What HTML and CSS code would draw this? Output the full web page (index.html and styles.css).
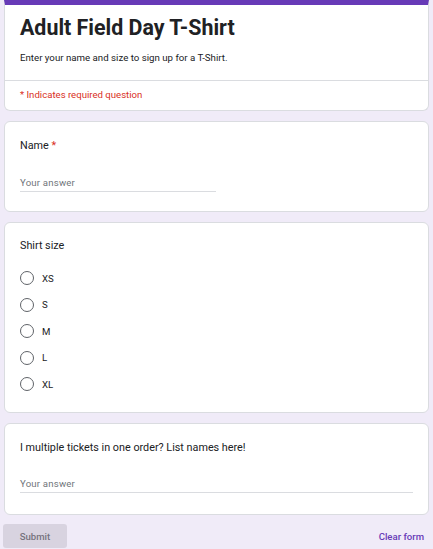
FILE: index.html
```html
<!DOCTYPE html>
<html lang="en">
<head>
<meta charset="utf-8">
<title>Adult Field Day T-Shirt</title>
<link rel="stylesheet" href="styles.css">
</head>
<body>
<main class="form">
  <section class="card header-card">
    <div class="header-main">
      <h1 class="title">Adult Field Day T-Shirt</h1>
      <p class="desc">Enter your name and size to sign up for a T-Shirt.</p>
    </div>
    <div class="required-note">* Indicates required question</div>
  </section>

  <section class="card question q-name">
    <div class="q-title">Name <span class="star">*</span></div>
    <div class="answer short">Your answer</div>
  </section>

  <section class="card question q-choice">
    <div class="q-title">Shirt size</div>
    <ul class="options">
      <li class="option"><span class="radio"></span><span class="opt-label">XS</span></li>
      <li class="option"><span class="radio"></span><span class="opt-label">S</span></li>
      <li class="option"><span class="radio"></span><span class="opt-label">M</span></li>
      <li class="option"><span class="radio"></span><span class="opt-label">L</span></li>
      <li class="option"><span class="radio"></span><span class="opt-label">XL</span></li>
    </ul>
  </section>

  <section class="card question q-last">
    <div class="q-title">I multiple tickets in one order? List names here!</div>
    <div class="answer long">Your answer</div>
  </section>

  <div class="footer">
    <button class="submit" type="button">Submit</button>
    <span class="clear">Clear form</span>
  </div>
</main>
</body>
</html>
```

FILE: styles.css
```css
* { box-sizing: border-box; }

html, body {
  margin: 0;
  padding: 0;
  background: #f0ebf8;
  font-family: Roboto, "Liberation Sans", Arial, sans-serif;
  color: #202124;
}

.form {
  display: flex;
  flex-direction: column;
  gap: 10px;
  padding: 0 4px;
}

.card {
  background: #fff;
  border: 1px solid #dadce0;
  border-radius: 6px;
}

.header-card {
  border-top: 5px solid #673ab7;
  border-top-left-radius: 0;
  border-top-right-radius: 0;
}

.header-main {
  padding: 9px 15px 15px 15px;
  border-bottom: 1px solid #dadce0;
}

.title {
  margin: 0;
  font-size: 21.4px;
  line-height: 28px;
  font-weight: 700;
  color: #202124;
}

.desc {
  margin: 9px 0 0 0;
  font-size: 9.7px;
  line-height: 14px;
  color: #202124;
}

.required-note {
  padding: 7px 15px 8px 15px;
  font-size: 9.6px;
  line-height: 14px;
  color: #d93025;
}

.question {
  padding: 16px 15px 19px 15px;
}

.q-title {
  font-size: 10.8px;
  line-height: 16px;
  color: #202124;
}

.star {
  color: #d93025;
}

.answer {
  margin-top: 22px;
  font-size: 9.6px;
  line-height: 14px;
  padding-bottom: 1px;
  color: #70757a;
  letter-spacing: 0.2px;
  border-bottom: 1px solid #dadce0;
}

.answer.short {
  width: 196px;
}

.answer.long {
  margin-top: 21px;
}

.q-choice {
  padding-top: 15px;
  padding-bottom: 14.5px;
}

.q-last {
  padding-top: 16px;
  padding-bottom: 21px;
}

.options {
  list-style: none;
  margin: 11px 0 0 0;
  padding: 0;
}

.option {
  height: 26.5px;
  display: flex;
  align-items: center;
  gap: 8px;
}

.radio {
  width: 14px;
  height: 14px;
  border: 1.5px solid #5f6368;
  border-radius: 50%;
  flex: none;
}

.opt-label {
  font-size: 9.6px;
  color: #202124;
}

.footer {
  display: flex;
  justify-content: space-between;
  align-items: center;
  padding: 0 5px 0 0;
  margin-left: -1px;
  margin-top: -1px;
}

.submit {
  width: 64px;
  height: 24px;
  border: none;
  border-radius: 3px;
  background: #d8d3e0;
  color: #77737e;
  font-family: Roboto, "Liberation Sans", Arial, sans-serif;
  font-size: 9.6px;
  font-weight: 500;
  padding: 0;
}

.clear {
  color: #673ab7;
  font-size: 9.6px;
  font-weight: 500;
}
```
